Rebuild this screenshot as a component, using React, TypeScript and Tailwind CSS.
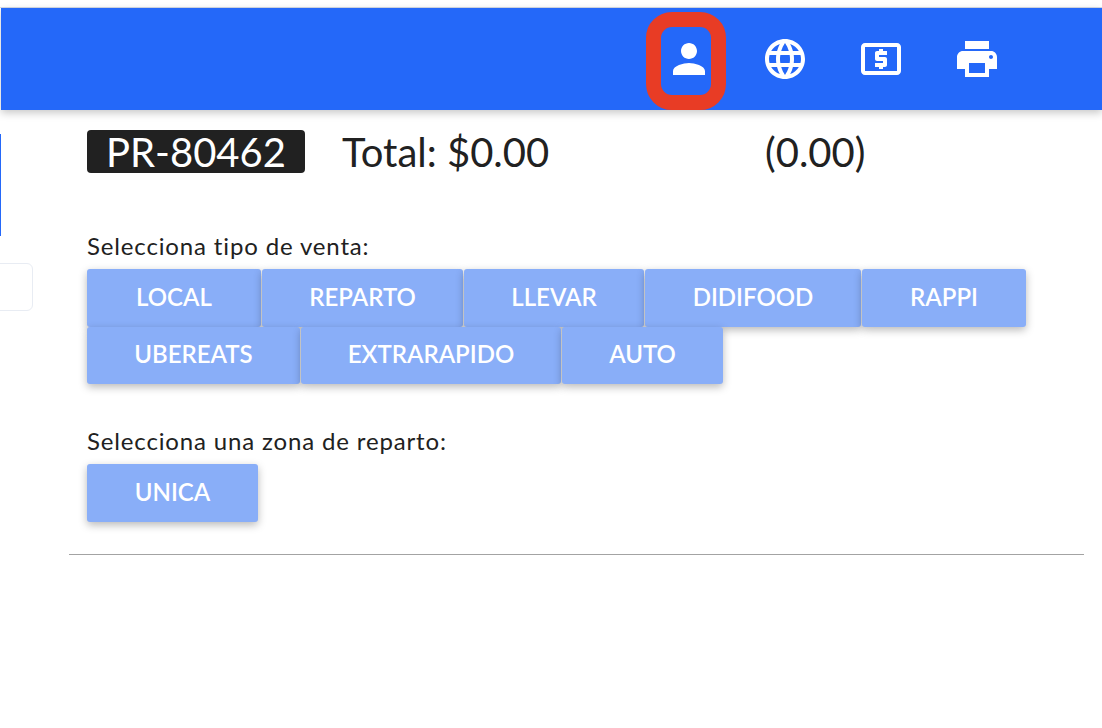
import { MdLanguage, MdLocalAtm, MdPerson, MdPrint } from 'react-icons/md';

const saleTypes = [
  { label: 'LOCAL', width: 'w-[174px]' },
  { label: 'REPARTO', width: 'w-[201px]' },
  { label: 'LLEVAR', width: 'w-[180px]' },
  { label: 'DIDIFOOD', width: 'w-[216px]' },
  { label: 'RAPPI', width: 'w-[164px]' },
  { label: 'UBEREATS', width: 'w-[213px]' },
  { label: 'EXTRARAPIDO', width: 'w-[260px]' },
  { label: 'AUTO', width: 'w-[161px]' },
];

function SaleButton({ label, width }: { label: string; width: string }) {
  return (
    <button className={`${width} flex h-[57.5px] items-center justify-center rounded-[3px] bg-[#89aef8] pb-0.5 text-[24px] font-semibold text-white shadow-[0_3px_8px_rgba(0,0,0,0.28)]`}>
      {label}
    </button>
  );
}

export default function App() {
  return (
    <div className="relative h-[728px] w-[1102px] overflow-hidden bg-white font-['Lato',sans-serif] text-[#212121]">
      <div className="h-2 border-b border-[#d5dbe6] bg-white" />

      <header className="ml-px flex h-[102px] items-center justify-end bg-[#2468f9] pr-[101px] shadow-[0_3px_8px_rgba(0,0,0,0.22)]">
        <div className="flex gap-12 text-white">
          <MdPerson size={48} />
          <MdLanguage size={48} />
          <MdLocalAtm size={48} />
          <MdPrint size={48} />
        </div>
      </header>

      {/* red annotation round the user icon */}
      <div className="absolute left-[646px] top-3 h-[98px] w-20 rounded-[26px] border-[15px] border-[#e83c25]" />

      {/* bits of the side drawer that stick out */}
      <div className="absolute left-0 top-[134px] h-[102px] w-px bg-[#2468f9]" />
      <div className="absolute -left-4 top-[263px] h-12 w-[49px] rounded-md border border-[#e8ecf3]" />

      <main className="pl-[87px] pt-5">
        <div className="flex h-[43px] items-center text-[40px]">
          <span className="flex h-[43px] w-[218px] items-center justify-center rounded bg-[#212121] text-white">PR-80462</span>
          <span className="ml-[37px] w-[423px]">Total: $0.00</span>
          <span>(0.00)</span>
        </div>

        <p className="mt-[58px] text-[24px] leading-[30px] tracking-[0.85px]">Selecciona tipo de venta:</p>
        <div className="mt-2 flex w-[960px] flex-wrap gap-x-px">
          {saleTypes.map(type => (
            <SaleButton key={type.label} label={type.label} width={type.width} />
          ))}
        </div>

        <p className="mt-[42px] text-[24px] leading-[30px] tracking-[0.85px]">Selecciona una zona de reparto:</p>
        <div className="mt-2 flex">
          <SaleButton label="UNICA" width="w-[171px]" />
        </div>

        <hr className="-ml-[18px] mt-8 w-[1015px] border-[#a3a3a3]" />
      </main>
    </div>
  );
}
